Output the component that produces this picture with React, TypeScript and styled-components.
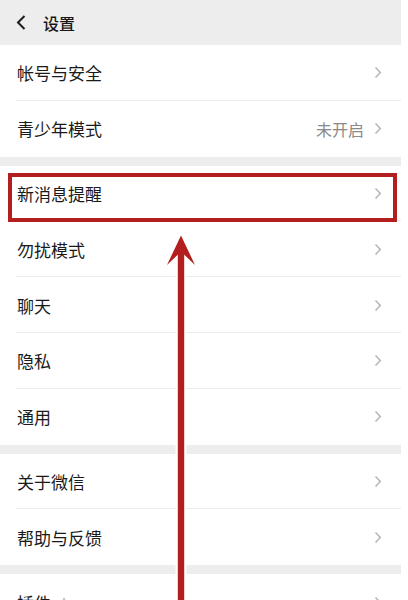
import React from "react";
import styled, { createGlobalStyle } from "styled-components";

const Global = createGlobalStyle`
  html, body { margin: 0; padding: 0; background: #ffffff; }
  body { font-family: "Noto Sans CJK SC", "Noto Sans", sans-serif; overflow: hidden; }
`;

const Page = styled.div`
  position: relative;
  width: 401px;
  height: 600px;
  overflow: hidden;
  background: #ededed;
`;

const Header = styled.div`
  height: 45px;
  display: flex;
  align-items: center;
  padding-left: 16px;
  gap: 17px;
  background: #ededed;
`;

const Title = styled.span`
  font-size: 16px;
  font-weight: 500;
  color: #161616;
  line-height: 1;
`;

const Group = styled.div`
  background: #ffffff;
  margin-bottom: 9px;
`;

const Row = styled.div<{ $last?: boolean }>`
  position: relative;
  height: 55.8px;
  display: flex;
  align-items: center;
  padding: 0 19px 0 17px;
  box-sizing: border-box;
  &::after {
    content: "";
    display: ${(p) => (p.$last ? "none" : "block")};
    position: absolute;
    left: 16px;
    right: 0;
    bottom: 0;
    height: 1px;
    background: #ececec;
  }
`;

const Label = styled.span`
  flex: 1;
  font-size: 17px;
  color: #1a1a1a;
  line-height: 1;
  display: flex;
  align-items: center;
  gap: 8px;
`;

const Value = styled.span`
  font-size: 16px;
  color: #8a8a8a;
  margin-right: 10px;
  line-height: 1;
`;

const Highlight = styled.div`
  position: absolute;
  left: 8px;
  top: 173px;
  width: 389px;
  height: 49px;
  border: 4.5px solid #b21f1e;
  box-sizing: border-box;
  pointer-events: none;
`;

const ArrowLayer = styled.svg`
  position: absolute;
  left: 0;
  top: 0;
  pointer-events: none;
`;

const Chevron = () => (
  <svg width="8" height="13" viewBox="0 0 8 13">
    <path d="M1.5 1.5 L6.3 6.5 L1.5 11.5" fill="none" stroke="#b5b5b5" strokeWidth="1.5" />
  </svg>
);

const BackIcon = () => (
  <svg width="10" height="15" viewBox="0 0 10 15">
    <path d="M8.5 1 L2 7.5 L8.5 14" fill="none" stroke="#1b1b1b" strokeWidth="2" />
  </svg>
);

const StarIcon = () => (
  <svg width="10" height="10" viewBox="0 0 10 10">
    <path d="M5 0.8 L6.2 3.8 L9.3 3.9 L6.9 5.9 L7.7 9 L5 7.2 L2.3 9 L3.1 5.9 L0.7 3.9 L3.8 3.8 Z" fill="none" stroke="#b0b0b0" strokeWidth="0.9" />
  </svg>
);

type Item = { label: string; value?: string; star?: boolean };

const groups: Item[][] = [
  [{ label: "帐号与安全" }, { label: "青少年模式", value: "未开启" }],
  [
    { label: "新消息提醒" },
    { label: "勿扰模式" },
    { label: "聊天" },
    { label: "隐私" },
    { label: "通用" },
  ],
  [{ label: "关于微信" }, { label: "帮助与反馈" }],
  [{ label: "插件", star: true }],
];

export default function App() {
  return (
    <>
      <Global />
      <Page>
        <Header>
          <BackIcon />
          <Title>设置</Title>
        </Header>
        {groups.map((g, gi) => (
          <Group key={gi}>
            {g.map((it, i) => (
              <Row key={it.label} $last={i === g.length - 1}>
                <Label>
                  {it.label}
                  {it.star && <StarIcon />}
                </Label>
                {it.value && <Value>{it.value}</Value>}
                <Chevron />
              </Row>
            ))}
          </Group>
        ))}
        <Highlight />
        <ArrowLayer width="401" height="600" viewBox="0 0 401 600">
          <rect x="175.5" y="250" width="11" height="360" fill="#ffffff" opacity="0.85" />
          <rect x="177.8" y="248" width="6.4" height="360" fill="#b21f1e" />
          <path d="M181 235.5 L195 265 L183.5 254 L178.5 254 L167 265 Z" fill="#b21f1e" />
        </ArrowLayer>
      </Page>
    </>
  );
}
